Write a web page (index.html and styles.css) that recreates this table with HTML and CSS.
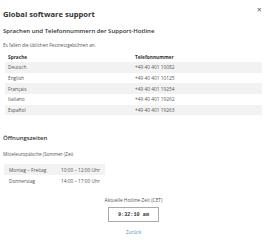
FILE: index.html
```html
<!DOCTYPE html>
<html lang="de">
<head>
<meta charset="utf-8">
<link rel="stylesheet" href="styles.css">
</head>
<body>
<div class="dialog">
  <button class="close" aria-label="Schließen">✕</button>
  <h1 class="title">Global software support</h1>
  <h2 class="subtitle">Sprachen und Telefonnummern der Support-Hotline</h2>
  <p class="note">Es fallen die üblichen Festnetzgebühren an.</p>
  <table class="phones">
    <thead><tr><th>Sprache</th><th>Telefonnummer</th></tr></thead>
    <tbody>
      <tr><td>Deutsch</td><td>+49 40 401 10082</td></tr>
      <tr><td>English</td><td>+49 40 401 10125</td></tr>
      <tr><td>Français</td><td>+49 40 401 19254</td></tr>
      <tr><td>Italiano</td><td>+49 40 401 19262</td></tr>
      <tr><td>Español</td><td>+49 40 401 19263</td></tr>
    </tbody>
  </table>
  <h2 class="section">Öffnungszeiten</h2>
  <p class="note note-tz">Mitteleuropäische (Sommer-)Zeit</p>
  <table class="hours">
    <tr><td>Montag – Freitag</td><td>10:00 – 12:00 Uhr</td></tr>
    <tr><td>Donnerstag</td><td>14:00 – 17:00 Uhr</td></tr>
  </table>
  <div class="clock-block">
    <p class="clock-label">Aktuelle Hotline-Zeit (CET)</p>
    <div class="clock">9:32:10 am</div>
    <a class="back" href="#">Zurück</a>
  </div>
</div>
</body>
</html>
```
FILE: styles.css
```css
html, body { margin: 0; padding: 0; background: #fff; }
body { font-family: "Open Sans", sans-serif; color: #333; }
.dialog { position: relative; padding: 9px 7px 0 3px; }
.close { position: absolute; top: 6px; right: 5px; border: 0; background: none; padding: 0; font-size: 6.5px; color: #555; font-family: "DejaVu Sans", sans-serif; }
.title { font-size: 7.6px; font-weight: 700; margin: 0 0 8px; color: #333; }
.subtitle { font-size: 6px; font-weight: 600; margin: 0 0 7px; color: #333; }
.note { font-size: 4.6px; margin: 0 0 4px; color: #555; }
table { border-collapse: collapse; font-size: 4.8px; color: #555; }
.phones { width: 257px; margin-left: 2px; }
.phones th { text-align: left; font-weight: 700; color: #333; height: 10px; padding: 0 0 0 3px; }
.phones td { height: 10.7px; padding: 0 0 0 3px; }
.phones th:first-child, .phones td:first-child { width: 124px; }
.phones tbody tr:nth-child(odd) { background: #f2f2f2; }
.section { font-size: 6px; font-weight: 600; margin: 19px 0 9px; color: #333; }
.note-tz { margin-bottom: 7px; }
.hours { margin-left: 1px; width: 101px; }
.hours td { height: 11px; padding: 0 0 0 5px; }
.hours td:first-child { width: 47px; }
.hours tr:first-child { background: #f2f2f2; }
.clock-block { display: flex; flex-direction: column; align-items: center; margin-top: 11px; margin-left: 4px; }
.clock-label { font-size: 4.8px; color: #555; margin: 0 0 4px; }
.clock { border: 1px solid #aaa; width: 49px; height: 13px; display: flex; align-items: center; justify-content: center; font-family: "Liberation Mono", monospace; font-size: 5.2px; font-weight: 700; color: #333; }
.back { margin-top: 7px; font-size: 4.8px; color: #4a8fc6; text-decoration: underline; }
```
